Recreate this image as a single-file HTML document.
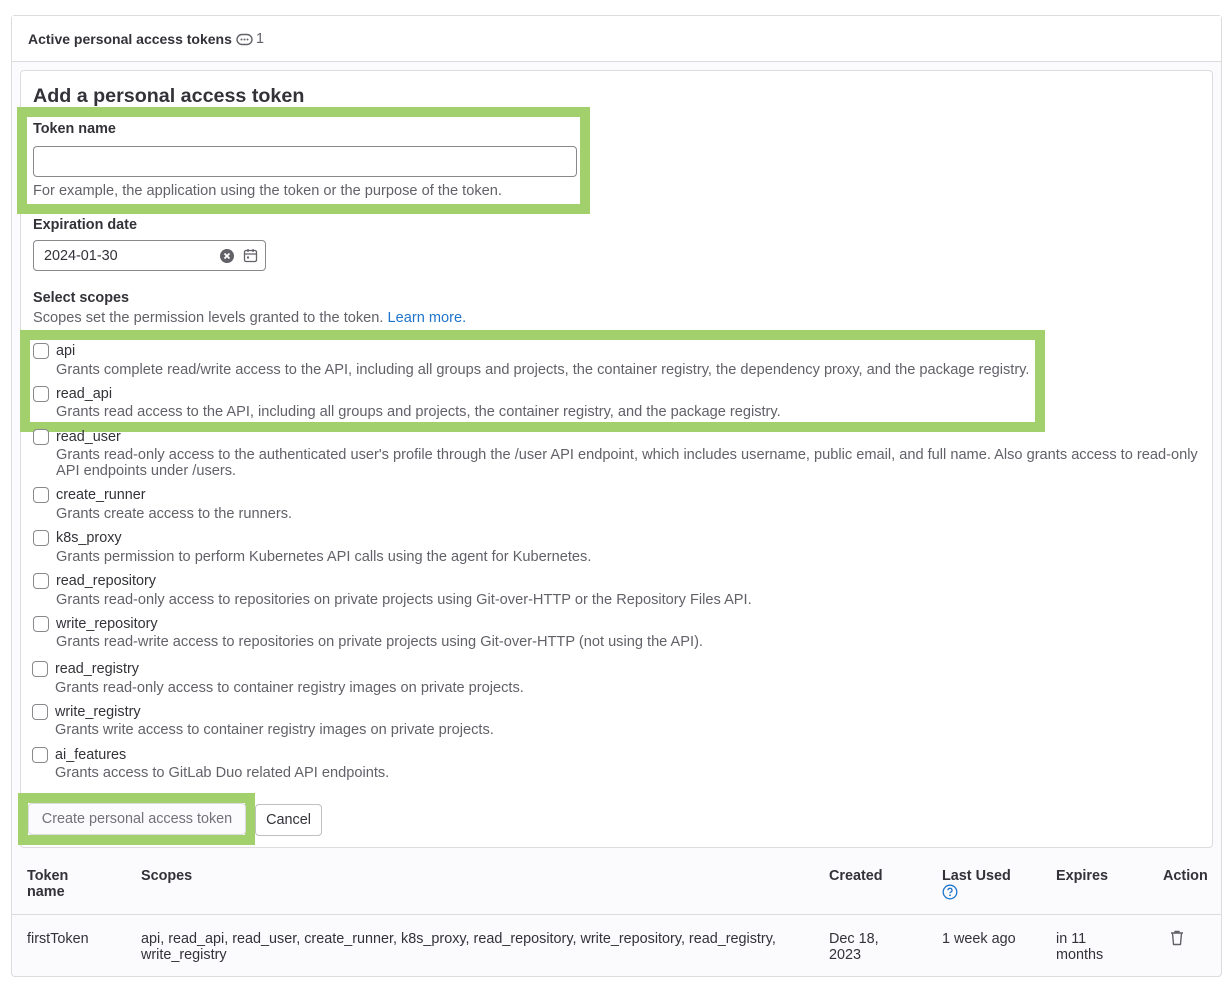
<!DOCTYPE html>
<html><head><style>
*{box-sizing:border-box;margin:0;padding:0}
body{width:1226px;height:984px;background:#fff;font-family:"Liberation Sans",sans-serif;color:#333238;position:relative;overflow:hidden;font-size:14.4px}
.a{position:absolute;white-space:nowrap}
.b{font-weight:bold}
.d{color:#626168}
.s{font-size:14.6px}
.cb{position:absolute;left:33px;width:16px;height:16px;border:1px solid #89888d;border-radius:4px;background:#fff}
.g{position:absolute;border:10px solid #a2d06d}
</style></head><body>
<div class="a" style="left:11px;top:15px;width:1211px;height:962px;border:1px solid #dcdcde;border-radius:4px;background:#fbfafd"></div>
<div class="a" style="left:12px;top:16px;width:1209px;height:46px;background:#fff;border-bottom:1px solid #dcdcde"></div>
<div class="a b" style="left:28px;top:31px;font-size:14px">Active personal access tokens</div>
<svg class="a" style="left:236px;top:33px" width="17" height="13" viewBox="0 0 17 13"><rect x="1" y="1.5" width="15" height="10" rx="5" fill="none" stroke="#626168" stroke-width="1.4"/><circle cx="5.5" cy="6.5" r="1" fill="#626168"/><circle cx="8.5" cy="6.5" r="1" fill="#626168"/><circle cx="11.5" cy="6.5" r="1" fill="#626168"/></svg>
<div class="a" style="left:256px;top:31px;color:#626168">1</div>
<div class="a" style="left:20px;top:70px;width:1193px;height:778px;border:1px solid #dcdcde;border-radius:4px;background:#fff"></div>
<div class="a b" style="left:33px;top:85px;font-size:19.7px">Add a personal access token</div>
<div class="g" style="left:17px;top:107px;width:573px;height:107px"></div>
<div class="a b" style="left:33px;top:121px">Token name</div>
<div class="a" style="left:33px;top:146px;width:544px;height:31px;border:1px solid #89888d;border-radius:4px"></div>
<div class="a d s" style="left:33px;top:183px">For example, the application using the token or the purpose of the token.</div>
<div class="a b" style="left:33px;top:217px">Expiration date</div>
<div class="a" style="left:33px;top:240px;width:233px;height:31px;border:1px solid #89888d;border-radius:4px"></div>
<div class="a" style="left:44px;top:248px">2024-01-30</div>
<svg class="a" style="left:219px;top:248px" width="16" height="16"><circle cx="8" cy="8" r="7" fill="#626168"/><path d="M5.5 5.5l5 5M10.5 5.5l-5 5" stroke="#fff" stroke-width="1.8"/></svg>
<svg class="a" style="left:243px;top:248px" width="15" height="15" viewBox="0 0 15 15"><rect x="1.5" y="2.5" width="12" height="11" rx="1.5" fill="none" stroke="#626168" stroke-width="1.3"/><path d="M1.5 6h12M5 1v3M10 1v3" stroke="#626168" stroke-width="1.3"/><rect x="4" y="8.5" width="2" height="2" fill="#626168"/></svg>
<div class="a b" style="left:33px;top:290px">Select scopes</div>
<div class="a d s" style="left:33px;top:310px">Scopes set the permission levels granted to the token. <span style="color:#1f75cb">Learn more.</span></div>
<div class="g" style="left:20px;top:330px;width:1025px;height:102px"></div>
<div class="cb" style="top:343px"></div><div class="a" style="left:56px;top:343px">api</div>
<div class="a d s" style="left:56px;top:362px">Grants complete read/write access to the API, including all groups and projects, the container registry, the dependency proxy, and the package registry.</div>
<div class="cb" style="top:386px"></div><div class="a" style="left:56px;top:386px">read_api</div>
<div class="a d s" style="left:56px;top:404px">Grants read access to the API, including all groups and projects, the container registry, and the package registry.</div>
<div class="cb" style="top:429px"></div><div class="a" style="left:56px;top:429px">read_user</div>
<div class="a d s" style="left:56px;top:447px;line-height:16px">Grants read-only access to the authenticated user's profile through the /user API endpoint, which includes username, public email, and full name. Also grants access to read-only<br>API endpoints under /users.</div>
<div class="cb" style="top:487px"></div><div class="a" style="left:56px;top:487px">create_runner</div>
<div class="a d s" style="left:56px;top:506px">Grants create access to the runners.</div>
<div class="cb" style="top:530px"></div><div class="a" style="left:56px;top:530px">k8s_proxy</div>
<div class="a d s" style="left:56px;top:549px">Grants permission to perform Kubernetes API calls using the agent for Kubernetes.</div>
<div class="cb" style="top:573px"></div><div class="a" style="left:56px;top:573px">read_repository</div>
<div class="a d s" style="left:56px;top:592px">Grants read-only access to repositories on private projects using Git-over-HTTP or the Repository Files API.</div>
<div class="cb" style="top:616px"></div><div class="a" style="left:56px;top:616px">write_repository</div>
<div class="a d s" style="left:56px;top:634px">Grants read-write access to repositories on private projects using Git-over-HTTP (not using the API).</div>
<div class="cb" style="top:661px;left:32px"></div><div class="a" style="left:55px;top:661px">read_registry</div>
<div class="a d s" style="left:55px;top:680px">Grants read-only access to container registry images on private projects.</div>
<div class="cb" style="top:704px;left:32px"></div><div class="a" style="left:55px;top:704px">write_registry</div>
<div class="a d s" style="left:55px;top:722px">Grants write access to container registry images on private projects.</div>
<div class="cb" style="top:747px;left:32px"></div><div class="a" style="left:55px;top:747px">ai_features</div>
<div class="a d s" style="left:55px;top:765px">Grants access to GitLab Duo related API endpoints.</div>
<div class="g" style="left:18px;top:793px;width:237px;height:52px"></div>
<div class="a" style="left:28px;top:803px;width:218px;height:32px;border:1px solid #dcdcde;border-radius:4px;background:#fbfafd;color:#737278;text-align:center;line-height:30px">Create personal access token</div>
<div class="a" style="left:255px;top:804px;width:67px;height:32px;border:1px solid #bfbfc3;border-radius:4px;text-align:center;line-height:30px">Cancel</div>
<div class="a" style="left:12px;top:914px;width:1209px;height:1px;background:#dcdcde"></div>
<div class="a b" style="left:27px;top:868px;line-height:16px">Token<br>name</div>
<div class="a b" style="left:141px;top:868px">Scopes</div>
<div class="a b" style="left:829px;top:868px">Created</div>
<div class="a b" style="left:942px;top:868px">Last Used</div>
<svg class="a" style="left:942px;top:884px" width="16" height="16"><circle cx="8" cy="8" r="6.8" fill="none" stroke="#1f75cb" stroke-width="1.3"/><path d="M6 6.3a2 2 0 1 1 2.6 1.9c-.5.2-.6.5-.6 1.1" fill="none" stroke="#1f75cb" stroke-width="1.3"/><circle cx="8" cy="11.3" r=".9" fill="#1f75cb"/></svg>
<div class="a b" style="left:1056px;top:868px">Expires</div>
<div class="a b" style="left:1163px;top:868px">Action</div>
<div class="a" style="left:27px;top:931px">firstToken</div>
<div class="a" style="left:141px;top:931px;line-height:16px">api, read_api, read_user, create_runner, k8s_proxy, read_repository, write_repository, read_registry,<br>write_registry</div>
<div class="a" style="left:829px;top:931px;line-height:16px">Dec 18,<br>2023</div>
<div class="a" style="left:942px;top:931px">1 week ago</div>
<div class="a" style="left:1056px;top:931px;line-height:16px">in 11<br>months</div>
<svg class="a" style="left:1170px;top:930px" width="14" height="16" viewBox="0 0 14 16"><path d="M1 3h12M5 3V1.5h4V3M2.5 3l1 11.5h7l1-11.5" fill="none" stroke="#626168" stroke-width="1.4" stroke-linejoin="round"/></svg>
</body></html>
